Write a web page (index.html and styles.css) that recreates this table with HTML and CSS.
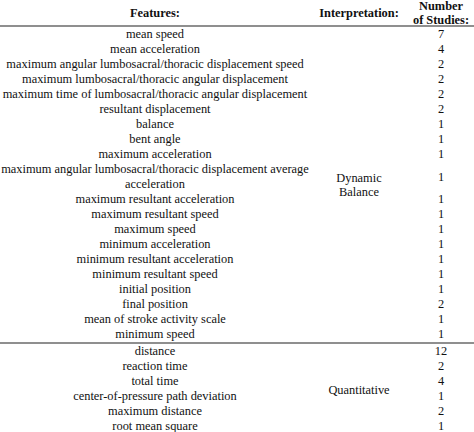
FILE: index.html
```html
<!DOCTYPE html>
<html lang="en">
<head>
<meta charset="utf-8">
<title>Features table</title>
<link rel="stylesheet" href="styles.css">
</head>
<body>
<table class="tbl">
  <colgroup>
    <col class="c-feat">
    <col class="c-int">
    <col class="c-num">
  </colgroup>
  <thead>
    <tr>
      <th><div class="hcell">Features:</div></th>
      <th><div class="hcell">Interpretation:</div></th>
      <th><div class="hcell"><span>Number</span><span>of Studies:</span></div></th>
    </tr>
  </thead>
  <tbody class="grp">
    <tr><td>mean speed</td><td class="interp" rowspan="20">Dynamic<br>Balance</td><td>7</td></tr>
    <tr><td>mean acceleration</td><td>4</td></tr>
    <tr><td>maximum angular lumbosacral/thoracic displacement speed</td><td>2</td></tr>
    <tr><td>maximum lumbosacral/thoracic angular displacement</td><td>2</td></tr>
    <tr><td>maximum time of lumbosacral/thoracic angular displacement</td><td>2</td></tr>
    <tr><td>resultant displacement</td><td>2</td></tr>
    <tr><td>balance</td><td>1</td></tr>
    <tr><td>bent angle</td><td>1</td></tr>
    <tr><td>maximum acceleration</td><td>1</td></tr>
    <tr><td class="wrap">maximum angular lumbosacral/thoracic displacement average acceleration</td><td>1</td></tr>
    <tr><td>maximum resultant acceleration</td><td>1</td></tr>
    <tr><td>maximum resultant speed</td><td>1</td></tr>
    <tr><td>maximum speed</td><td>1</td></tr>
    <tr><td>minimum acceleration</td><td>1</td></tr>
    <tr><td>minimum resultant acceleration</td><td>1</td></tr>
    <tr><td>minimum resultant speed</td><td>1</td></tr>
    <tr><td>initial position</td><td>1</td></tr>
    <tr><td>final position</td><td>2</td></tr>
    <tr><td>mean of stroke activity scale</td><td>1</td></tr>
    <tr><td>minimum speed</td><td>1</td></tr>
  </tbody>
  <tbody>
    <tr><td>distance</td><td class="interp" rowspan="6">Quantitative</td><td>12</td></tr>
    <tr><td>reaction time</td><td>2</td></tr>
    <tr><td>total time</td><td>4</td></tr>
    <tr><td>center-of-pressure path deviation</td><td>1</td></tr>
    <tr><td>maximum distance</td><td>2</td></tr>
    <tr><td>root mean square</td><td>1</td></tr>
  </tbody>
</table>
</body>
</html>
```

FILE: styles.css
```css
html, body {
  margin: 0;
  padding: 0;
  background: #ffffff;
}
body {
  overflow: hidden;
  font-family: "Liberation Serif", "Times New Roman", serif;
  font-size: 12.4px;
  color: #111111;
}
.tbl {
  border-collapse: collapse;
  table-layout: fixed;
  width: 474px;
}
.c-feat { width: 310px; }
.c-int { width: 98px; }
.c-num { width: 66px; }
.tbl th {
  padding: 0;
  height: 25px;
  font-weight: bold;
  text-align: center;
  vertical-align: middle;
  border-bottom: 2px solid #8f8f8f;
}
.hcell {
  height: 25px;
  display: flex;
  flex-direction: column;
  justify-content: center;
  align-items: center;
  line-height: 14px;
  white-space: nowrap;
}
.tbl td {
  padding: 0;
  line-height: 15px;
  text-align: center;
  vertical-align: middle;
  white-space: nowrap;
}
.tbl td.wrap {
  white-space: normal;
}
.grp {
  border-bottom: 2px solid #8f8f8f;
}
.tbl td.interp {
  line-height: 14px;
  padding-top: 1px;
}
```
